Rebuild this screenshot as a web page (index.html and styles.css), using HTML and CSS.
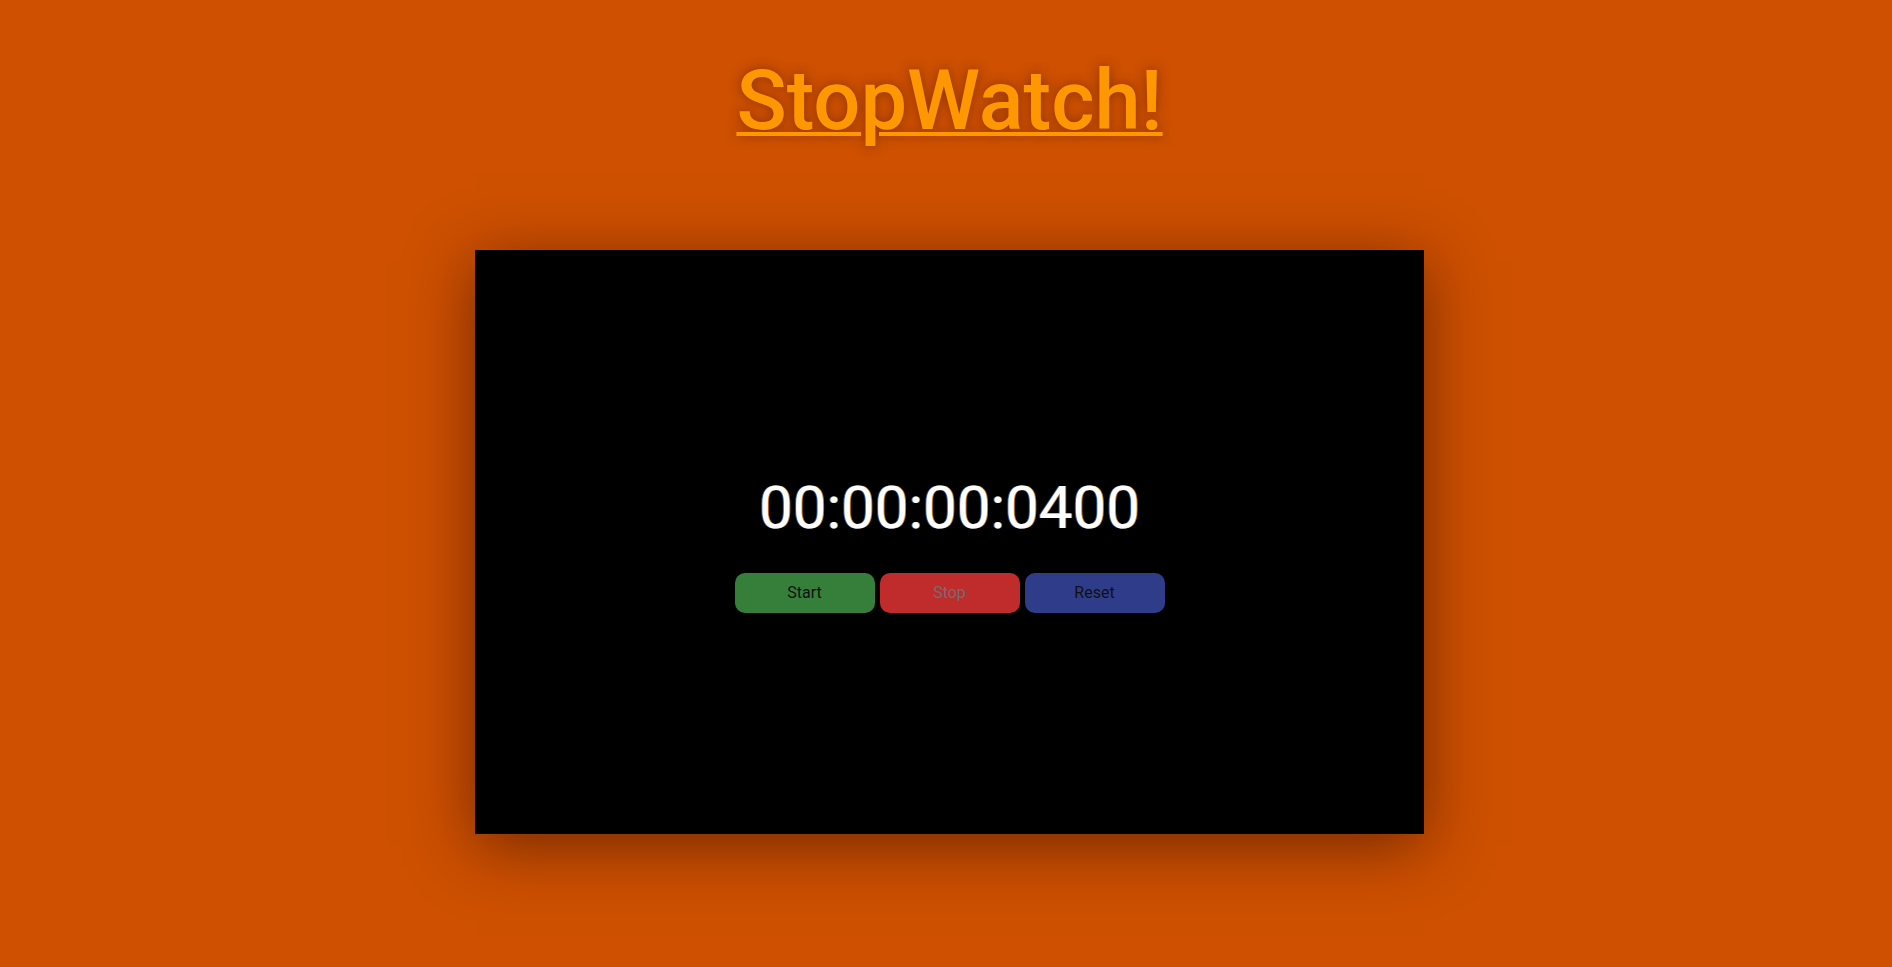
FILE: index.html
```html
<!DOCTYPE html>
<html lang="en">
<head>
<meta charset="utf-8">
<title>StopWatch!</title>
<link rel="stylesheet" href="styles.css">
</head>
<body>
  <header class="header">
    <h1 class="title">StopWatch!</h1>
  </header>
  <main class="watch">
    <div class="time">00:00:00:0400</div>
    <div class="controls">
      <button class="btn btn-start">Start</button>
      <button class="btn btn-stop" disabled>Stop</button>
      <button class="btn btn-reset">Reset</button>
    </div>
  </main>
</body>
</html>
```

FILE: styles.css
```css
html, body {
  margin: 0;
  height: 100%;
}
body {
  background: #ce5000;
  font-family: Roboto, "Liberation Sans", sans-serif;
  padding-left: 7px;
  box-sizing: border-box;
  overflow: hidden;
}
.header {
  display: flex;
  justify-content: center;
  padding-top: 52px;
}
.title {
  margin: 0;
  font-size: 83px;
  font-weight: 500;
  line-height: normal;
  color: #ff9800;
  text-decoration: underline;
  text-decoration-thickness: 4px;
  text-underline-offset: 3px;
  text-shadow: 0 0 12px rgba(90, 30, 0, 0.55);
}
.watch {
  width: 949px;
  height: 584px;
  margin: 101px auto 0;
  background: #000;
  box-shadow: 0 12px 60px rgba(40, 10, 0, 0.55);
  display: flex;
  flex-direction: column;
  align-items: center;
  justify-content: center;
}
.time {
  color: #fff;
  font-size: 60px;
  line-height: normal;
  text-shadow: -1px 0 rgba(60, 140, 255, 0.7), 1px 0 rgba(255, 152, 0, 0.8);
}
.controls {
  display: flex;
  gap: 5px;
  margin-top: 30px;
}
.btn {
  width: 140px;
  height: 40px;
  border: none;
  border-radius: 10px;
  font-family: Roboto, "Liberation Sans", sans-serif;
  font-size: 16px;
  color: #111;
  padding: 0;
}
.btn-start { background: #367f3a; }
.btn-stop { background: #c02c2c; color: #6f6f6f; }
.btn-reset { background: #2f3c89; }
```
